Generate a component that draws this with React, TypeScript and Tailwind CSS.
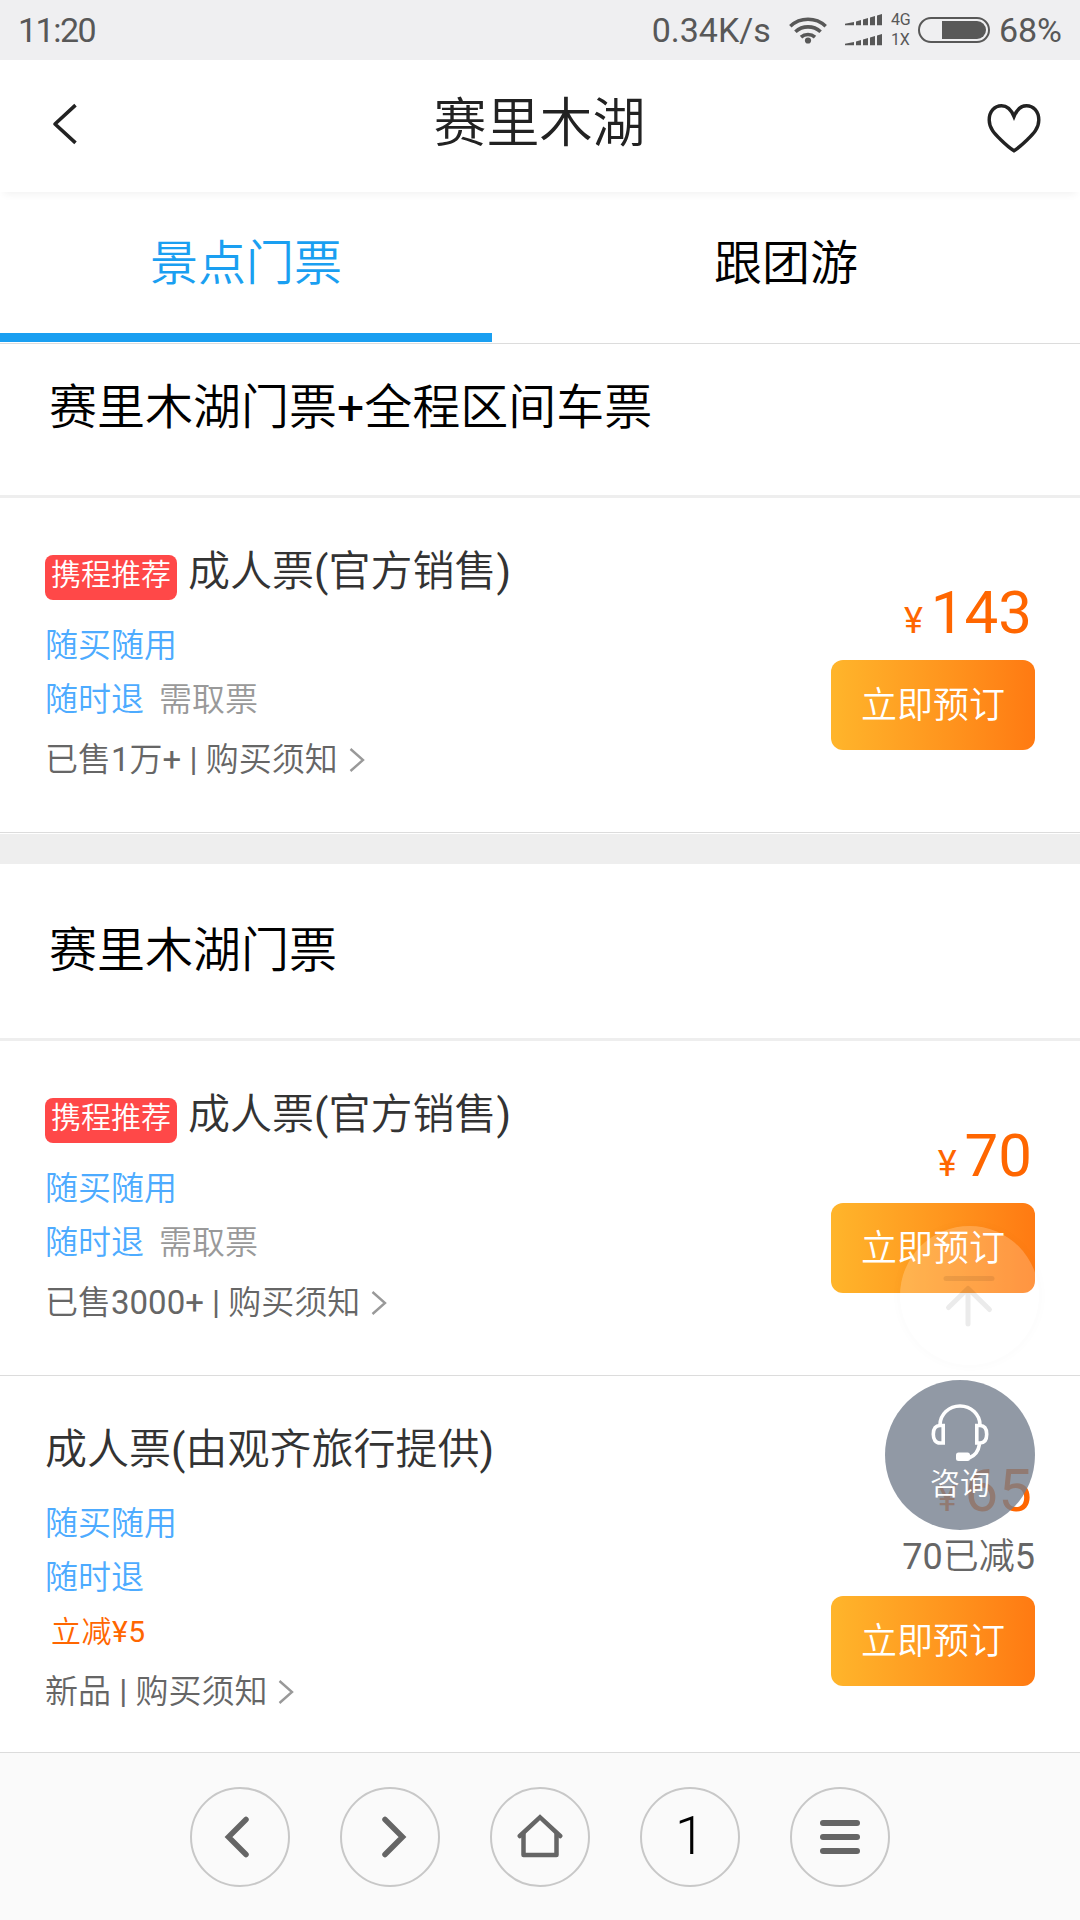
import React from 'react';

interface Ticket {
  title: string;
  recommended?: boolean;
  pickup?: boolean;
  discount?: string;
  sold: string;
  price: number;
  priceNote?: string;
}

const officialTickets: Ticket[] = [
  { title: '成人票(官方销售)', recommended: true, pickup: true, sold: '已售1万+', price: 143 },
];

const lakeTickets: Ticket[] = [
  { title: '成人票(官方销售)', recommended: true, pickup: true, sold: '已售3000+', price: 70 },
  {
    title: '成人票(由观齐旅行提供)',
    discount: '立减¥5',
    sold: '新品',
    price: 65,
    priceNote: '70已减5',
  },
];

function SignalBars() {
  return (
    <svg width="38" height="12" viewBox="0 0 38 12" fill="#585858">
      <path d="M0 11.2V9.8L9 8v3.2zM11 7.5l5-1.6v5.3h-5zM18 5.5l5-1.5v7.2h-5zM25 3.5l5-1.5v9.2h-5zM32 1.4L37 0v11.2h-5z" />
    </svg>
  );
}

function StatusBar() {
  return (
    <div className="flex h-[60px] items-center bg-[#efeff1] px-[18px] text-[34px] leading-[60px] text-[#585858]">
      <span className="tracking-[-1.5px]">11:20</span>
      <span className="mr-[18px] ml-auto">0.34K/s</span>
      <svg width="38" height="28" viewBox="0 0 38 28" fill="none" stroke="#585858" strokeWidth="3.6">
        <path d="M1.3 10.2a26 26 0 0 1 35.4 0" />
        <path d="M6.4 15.8a18.5 18.5 0 0 1 25.2 0" />
        <path d="M12 21.2a10.5 10.5 0 0 1 14 0" />
        <circle cx="19" cy="24.5" r="3.1" fill="#585858" stroke="none" />
      </svg>
      <div className="ml-[18px] flex flex-col gap-2">
        <SignalBars />
        <SignalBars />
      </div>
      <div className="ml-[8px] flex w-[22px] flex-col text-[16px] leading-[20px]">
        <span>4G</span>
        <span>1X</span>
      </div>
      <svg className="mr-[9px] ml-[5px]" width="72" height="26" viewBox="0 0 72 26">
        <rect x="1" y="1" width="70" height="24" rx="12" fill="none" stroke="#585858" strokeWidth="2" />
        <path d="M24 4h35a9 9 0 0 1 0 18H24z" fill="#585858" />
      </svg>
      <span>68%</span>
    </div>
  );
}

function Header() {
  return (
    <header className="relative flex h-[132px] items-center justify-between bg-white pr-[39px] pl-[52px] text-[#222] shadow-[0_6px_8px_-4px_rgba(0,0,0,0.06)]">
      <svg width="26" height="42" viewBox="0 0 26 42" className="mb-1" fill="none" stroke="currentColor" strokeWidth="3.6">
        <path d="M23.5 2.2L3 21l20.5 18.8" strokeLinejoin="round" />
      </svg>
      <h1 className="mb-1 pl-[14px] text-[53px] leading-[64px]">赛里木湖</h1>
      <svg width="54" height="50" viewBox="0 0 54 50" className="mt-1" fill="none" stroke="currentColor" strokeWidth="3.4">
        <path d="M27 13.5C24 6 19.5 2.7 14.5 2.7 7.5 2.7 2.2 8.5 2.2 17c0 8.5 5.7 14 11.3 19.5 4.6 4.5 9.5 8.8 13.5 11.3 4-2.5 8.9-6.8 13.5-11.3C46.1 31 51.8 25.5 51.8 17c0-8.5-5.300-14.300-12.300-14.300-5 0-9.500 3.300-12.500 10.800z" />
      </svg>
    </header>
  );
}

function Tabs() {
  return (
    <div className="flex h-[152px] border-b border-[#dcdcdc] text-[48px] leading-[144px]">
      <div className="mb-px w-[492px] border-b-[9px] border-[#1a9ff1] text-center text-[#1a9ff1]">景点门票</div>
      <div className="flex-1 text-center text-black">跟团游</div>
    </div>
  );
}

function TicketRow({ ticket }: { ticket: Ticket }) {
  return (
    <div className="flex justify-between px-[45px]">
      <div className="pt-[44px] text-[33px] leading-[54px]">
        <div className="flex h-[60px] items-center">
          {ticket.recommended && (
            <span className="mt-[11px] mr-[11px] h-[45px] rounded-[8px] bg-[#ff4848] px-[6px] text-[30px] leading-[40px] text-white">
              携程推荐
            </span>
          )}
          <span className="text-[42px] leading-[60px] text-[#333]">{ticket.title}</span>
        </div>
        <div className="mt-[17px] text-[#4dabff]">随买随用</div>
        <div className="flex gap-[15px] text-[#4dabff]">
          <span>随时退</span>
          {ticket.pickup && <span className="text-[#999]">需取票</span>}
        </div>
        {ticket.discount && (
          <div className="pl-[6px] text-[30px] tracking-[0.5px] text-[#ff6600]">{ticket.discount}</div>
        )}
        <div className="mt-[6px] flex items-center text-[#666]">
          <span>{ticket.sold} | 购买须知</span>
          <svg className="ml-[11px]" width="16" height="26" viewBox="0 0 16 26" fill="none" stroke="#999" strokeWidth="2.4">
            <path d="M1.5 2L14 13 1.5 24" />
          </svg>
        </div>
      </div>
      <div className="flex flex-col items-end pt-[85px]">
        <div className="mr-[3px] flex h-[60px] items-baseline gap-[8px] text-[#ff6600]">
          <span className="text-[36px] leading-none">¥</span>
          <span className="text-[60px] leading-[60px]">{ticket.price}</span>
        </div>
        {ticket.priceNote && (
          <div className="mt-[16px] mb-[2px] text-[36px] leading-[40px] text-[#666]">{ticket.priceNote}</div>
        )}
        <button className="mt-[17px] h-[90px] w-[204px] rounded-[12px] bg-linear-to-r from-[#ffb52b] to-[#ff7a12] pt-[2px] text-[36px] leading-[88px] text-white">
          立即预订
        </button>
      </div>
    </div>
  );
}

function BackToTop() {
  return (
    <div className="absolute top-[1226px] left-[900px] size-[139px] rounded-full bg-white/20 shadow-[0_0_8px_3px_rgba(0,0,0,0.015)]">
      <svg width="139" height="139" viewBox="0 0 139 139" fill="none" stroke="#000" strokeOpacity="0.08" strokeWidth="5" strokeLinecap="round">
        <path d="M46 52.5h46" />
        <path d="M68 98V62.5M48.5 81.5L68 62.5l21.5 21" strokeLinejoin="round" />
      </svg>
    </div>
  );
}

function Consult() {
  return (
    <div className="absolute top-[1380px] left-[885px] flex size-[150px] flex-col items-center rounded-full bg-[#76808f]/80 pt-[23px] text-white">
      <svg width="60" height="60" viewBox="0 0 60 60" fill="none" stroke="#fff" strokeWidth="3.6">
        <path d="M10 22a20 19 0 0 1 40 0" />
        <path d="M13.2 22.5v17.5h-3.2c-4.5 0-6.7-3.5-6.7-8.7s2.2-8.8 6.7-8.8zM46.8 22.5v17.5h3.2c4.5 0 6.7-3.5 6.7-8.7s-2.2-8.8-6.7-8.8z" />
        <path d="M49.5 41c-1 7-5 12-10.5 14" />
        <rect x="26" y="49.5" width="14" height="8.5" rx="2.5" fill="#fff" stroke="none" />
      </svg>
      <span className="text-[30px] leading-[42px]">咨询</span>
    </div>
  );
}

function NavButton({ children }: { children: React.ReactNode }) {
  return (
    <div className="flex size-[100px] items-center justify-center rounded-full border-2 border-[#c8c8c8] text-[#656565]">
      {children}
    </div>
  );
}

function BottomNav() {
  return (
    <nav className="flex h-[168px] justify-center gap-[50px] border-t border-[#dcdcdc] bg-[#fafafa] pt-[34px]">
      <NavButton>
        <svg className="mr-[7px]" width="26" height="42" viewBox="0 0 26 42" fill="none" stroke="currentColor" strokeWidth="5.5" strokeLinecap="round">
          <path d="M22 3.5L4.5 21 22 38.5" />
        </svg>
      </NavButton>
      <NavButton>
        <svg className="ml-[7px]" width="26" height="42" viewBox="0 0 26 42" fill="none" stroke="currentColor" strokeWidth="5.5" strokeLinecap="round">
          <path d="M4 3.5L21.5 21 4 38.5" />
        </svg>
      </NavButton>
      <NavButton>
        <svg className="mb-[3px]" width="46" height="44" viewBox="0 0 46 44" fill="none" stroke="currentColor" strokeWidth="4.5" strokeLinecap="round">
          <path d="M2.8 22L23 3.2 43.2 22" />
          <path d="M6.5 20v21h33V20" strokeLinejoin="round" />
        </svg>
      </NavButton>
      <NavButton>
        <span className="mb-[2px] text-[54px] leading-[94px] font-light text-black">1</span>
      </NavButton>
      <NavButton>
        <svg width="40" height="34" viewBox="0 0 40 34" fill="currentColor">
          <rect width="40" height="6" rx="3" />
          <rect y="14" width="40" height="6" rx="3" />
          <rect y="28" width="40" height="6" rx="3" />
        </svg>
      </NavButton>
    </nav>
  );
}

export default function App() {
  return (
    <div className="relative flex h-[1920px] w-[1080px] flex-col overflow-hidden bg-white font-[Roboto,'Noto_Sans_CJK_SC_DemiLight','Noto_Sans_CJK_SC',sans-serif]">
      <StatusBar />
      <Header />
      <Tabs />

      {/* Tickets with shuttle */}
      <h2 className="h-[154px] border-b-[3px] border-[#eee] pt-[34px] pl-[49px] text-[48px] leading-[60px] text-black">
        赛里木湖门票+全程区间车票
      </h2>
      <div className="h-[335px] border-b border-[#dcdcdc]">
        <TicketRow ticket={officialTickets[0]} />
      </div>
      <div className="mt-px h-[30px] bg-[#eee]"></div>

      {/* Entrance only */}
      <h2 className="h-[177px] border-b-[3px] border-[#eee] pt-[57px] pl-[49px] text-[48px] leading-[60px] text-black">
        赛里木湖门票
      </h2>
      <div className="h-[335px] border-b border-[#dcdcdc]">
        <TicketRow ticket={lakeTickets[0]} />
      </div>
      <div className="h-[376px]">
        <TicketRow ticket={lakeTickets[1]} />
      </div>

      <BottomNav />
      <BackToTop />
      <Consult />
    </div>
  );
}
